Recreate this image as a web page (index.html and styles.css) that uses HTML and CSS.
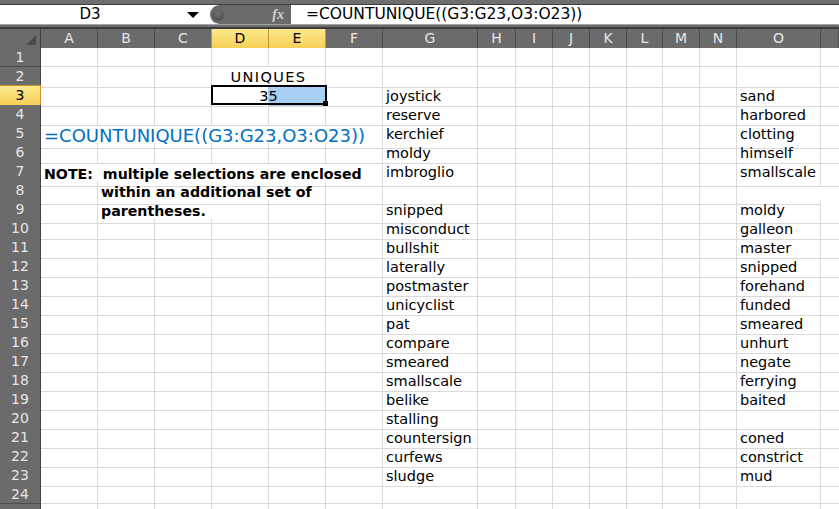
FILE: index.html
```html
<!DOCTYPE html>
<html>
<head>
<meta charset="utf-8">
<link rel="stylesheet" href="styles.css">
</head>
<body>
<div class="top">
  <div class="fbar">
    <div class="namebox"><span class="ref">D3</span><span class="arrow"></span></div>
    <div class="fxbtn"><span class="knob"></span><span class="fx">fx</span></div>
    <div class="input">=COUNTUNIQUE((G3:G23,O3:O23))</div>
  </div>
</div>
<div class="sheet">
  <div class="hrow">
    <div class="corner"><svg width="40" height="19" viewBox="0 0 40 19"><polygon points="26,16 36,16 36,6" fill="#4a4a4a"/></svg></div>
    <div>A</div><div>B</div><div>C</div><div class="sel">D</div><div class="sel">E</div><div>F</div><div>G</div><div>H</div><div>I</div><div>J</div><div>K</div><div>L</div><div>M</div><div>N</div><div>O</div><div></div>
  </div>
  <div class="row"><div class="rh">1</div><div></div><div></div><div></div><div></div><div></div><div></div><div></div><div></div><div></div><div></div><div></div><div></div><div></div><div></div><div></div><div></div></div>
  <div class="row"><div class="rh">2</div><div></div><div></div><div></div><div class="s2 uniq">UNIQUES</div><div></div><div></div><div></div><div></div><div></div><div></div><div></div><div></div><div></div><div></div><div></div></div>
  <div class="row"><div class="rh rsel">3</div><div></div><div></div><div></div><div class="s2 val">35</div><div></div><div class="t">joystick</div><div></div><div></div><div></div><div></div><div></div><div></div><div></div><div class="t">sand</div><div></div></div>
  <div class="row"><div class="rh">4</div><div></div><div></div><div></div><div></div><div></div><div></div><div class="t">reserve</div><div></div><div></div><div></div><div></div><div></div><div></div><div></div><div class="t">harbored</div><div></div></div>
  <div class="row"><div class="rh">5</div><div class="s6 formula">=COUNTUNIQUE((G3:G23,O3:O23))</div><div class="t">kerchief</div><div></div><div></div><div></div><div></div><div></div><div></div><div></div><div class="t">clotting</div><div></div></div>
  <div class="row"><div class="rh">6</div><div></div><div></div><div></div><div></div><div></div><div></div><div class="t">moldy</div><div></div><div></div><div></div><div></div><div></div><div></div><div></div><div class="t">himself</div><div></div></div>
  <div class="row"><div class="rh">7</div><div class="s6 note n1">NOTE:&nbsp; multiple selections are enclosed</div><div class="t">imbroglio</div><div></div><div></div><div></div><div></div><div></div><div></div><div></div><div class="t">smallscale</div><div></div></div>
  <div class="row"><div class="rh">8</div><div></div><div class="s4 note">within an additional set of</div><div></div><div></div><div></div><div></div><div></div><div></div><div></div><div></div><div></div><div></div></div>
  <div class="row"><div class="rh">9</div><div></div><div class="s3 note">parentheses.</div><div></div><div></div><div class="t">snipped</div><div></div><div></div><div></div><div></div><div></div><div></div><div></div><div class="t">moldy</div><div></div></div>
  <div class="row"><div class="rh">10</div><div></div><div></div><div></div><div></div><div></div><div></div><div class="t">misconduct</div><div></div><div></div><div></div><div></div><div></div><div></div><div></div><div class="t">galleon</div><div></div></div>
  <div class="row"><div class="rh">11</div><div></div><div></div><div></div><div></div><div></div><div></div><div class="t">bullshit</div><div></div><div></div><div></div><div></div><div></div><div></div><div></div><div class="t">master</div><div></div></div>
  <div class="row"><div class="rh">12</div><div></div><div></div><div></div><div></div><div></div><div></div><div class="t">laterally</div><div></div><div></div><div></div><div></div><div></div><div></div><div></div><div class="t">snipped</div><div></div></div>
  <div class="row"><div class="rh">13</div><div></div><div></div><div></div><div></div><div></div><div></div><div class="t">postmaster</div><div></div><div></div><div></div><div></div><div></div><div></div><div></div><div class="t">forehand</div><div></div></div>
  <div class="row"><div class="rh">14</div><div></div><div></div><div></div><div></div><div></div><div></div><div class="t">unicyclist</div><div></div><div></div><div></div><div></div><div></div><div></div><div></div><div class="t">funded</div><div></div></div>
  <div class="row"><div class="rh">15</div><div></div><div></div><div></div><div></div><div></div><div></div><div class="t">pat</div><div></div><div></div><div></div><div></div><div></div><div></div><div></div><div class="t">smeared</div><div></div></div>
  <div class="row"><div class="rh">16</div><div></div><div></div><div></div><div></div><div></div><div></div><div class="t">compare</div><div></div><div></div><div></div><div></div><div></div><div></div><div></div><div class="t">unhurt</div><div></div></div>
  <div class="row"><div class="rh">17</div><div></div><div></div><div></div><div></div><div></div><div></div><div class="t">smeared</div><div></div><div></div><div></div><div></div><div></div><div></div><div></div><div class="t">negate</div><div></div></div>
  <div class="row"><div class="rh">18</div><div></div><div></div><div></div><div></div><div></div><div></div><div class="t">smallscale</div><div></div><div></div><div></div><div></div><div></div><div></div><div></div><div class="t">ferrying</div><div></div></div>
  <div class="row"><div class="rh">19</div><div></div><div></div><div></div><div></div><div></div><div></div><div class="t">belike</div><div></div><div></div><div></div><div></div><div></div><div></div><div></div><div class="t">baited</div><div></div></div>
  <div class="row"><div class="rh">20</div><div></div><div></div><div></div><div></div><div></div><div></div><div class="t">stalling</div><div></div><div></div><div></div><div></div><div></div><div></div><div></div><div></div><div></div></div>
  <div class="row"><div class="rh">21</div><div></div><div></div><div></div><div></div><div></div><div></div><div class="t">countersign</div><div></div><div></div><div></div><div></div><div></div><div></div><div></div><div class="t">coned</div><div></div></div>
  <div class="row"><div class="rh">22</div><div></div><div></div><div></div><div></div><div></div><div></div><div class="t">curfews</div><div></div><div></div><div></div><div></div><div></div><div></div><div></div><div class="t">constrict</div><div></div></div>
  <div class="row"><div class="rh">23</div><div></div><div></div><div></div><div></div><div></div><div></div><div class="t">sludge</div><div></div><div></div><div></div><div></div><div></div><div></div><div></div><div class="t">mud</div><div></div></div>
  <div class="row"><div class="rh">24</div><div></div><div></div><div></div><div></div><div></div><div></div><div></div><div></div><div></div><div></div><div></div><div></div><div></div><div></div><div></div><div></div></div>
  <div class="row"><div class="rh"></div><div></div><div></div><div></div><div></div><div></div><div></div><div></div><div></div><div></div><div></div><div></div><div></div><div></div><div></div><div></div><div></div></div>
  <div class="selbox"></div>
  <div class="handle"></div>
</div>
</body>
</html>
```
FILE: styles.css
```css
html, body {
  margin: 0;
  padding: 0;
  width: 839px;
  height: 509px;
  overflow: hidden;
  background: #ffffff;
  font-family: "DejaVu Sans", Verdana, sans-serif;
}

.top {
  height: 29px;
  box-sizing: border-box;
  background: #6e6e6e;
  padding-top: 4px;
  border-bottom: 2px solid #3c3c3c;
}

.fbar {
  display: flex;
  height: 21px;
  box-sizing: border-box;
  border-top: 1px solid #3f3f3f;
  border-bottom: 1px solid #a3a3a3;
  background: #ffffff;
}

.namebox {
  width: 210px;
  display: flex;
  align-items: center;
  background: #ffffff;
}

.ref {
  width: 180px;
  text-align: center;
  font-size: 15px;
  line-height: 19px;
  color: #000;
}

.arrow {
  margin-left: 7px;
  width: 0;
  height: 0;
  border-left: 6px solid transparent;
  border-right: 6px solid transparent;
  border-top: 6px solid #000;
}

.fxbtn {
  width: 81px;
  background: #6a6a6a;
  border-radius: 10px 0 0 10px;
  display: flex;
  align-items: center;
  justify-content: space-between;
  padding: 0 7px 0 2px;
  box-sizing: border-box;
}

.knob {
  width: 12px;
  height: 12px;
  border-radius: 50%;
  background: radial-gradient(circle at 50% 35%, #747474 0, #555555 60%, #4a4a4a 100%);
}

.fx {
  font-family: "Liberation Serif", "DejaVu Serif", serif;
  font-style: italic;
  font-weight: bold;
  font-size: 14px;
  color: #d2d2d2;
  line-height: 19px;
}

.input {
  flex: 1;
  padding-left: 15px;
  font-size: 15.5px;
  line-height: 19px;
  color: #000;
  white-space: nowrap;
}

.sheet {
  position: relative;
}

.hrow, .row {
  display: grid;
  grid-template-columns: 41px repeat(6, 57px) 95px 38px 37px 37px 37px 36px 37px 37px 84px 1fr;
  height: 19px;
}

.hrow > div {
  background: #6b6b6b;
  color: #e6e6e6;
  font-size: 14px;
  line-height: 19px;
  text-align: center;
  border-right: 1px solid #4c4c4c;
  box-sizing: border-box;
}

.hrow > .corner {
  border-right: 1px solid #444;
}

.corner svg {
  display: block;
}

.hrow > .sel {
  background: linear-gradient(#fde98d, #f6cf55);
  color: #000;
  border-right: 1px solid #c8962f;
  box-shadow: -1px 0 0 #c8962f;
}

.row > div {
  border-right: 1px solid #dadada;
  border-bottom: 1px solid #dadada;
  box-sizing: border-box;
  white-space: nowrap;
  min-width: 0;
}

.row > div:last-child {
  border-right: none;
}

.row > .rh {
  background: #6b6b6b;
  color: #e6e6e6;
  font-size: 14px;
  line-height: 18px;
  text-align: center;
  border-right: 1px solid #444;
  border-bottom: 1px solid #4c4c4c;
}

.row > .rsel {
  background: linear-gradient(#fde98d, #f6cf55);
  color: #000;
  border-bottom: 1px solid #c8962f;
  border-right: 1px solid #c8962f;
  box-shadow: 0 -1px 0 #c8962f;
}

.t {
  font-size: 14.5px;
  line-height: 20px;
  padding-left: 3px;
  color: #000;
}

.s2 { grid-column: span 2; }
.s3 { grid-column: span 3; }
.s4 { grid-column: span 4; }
.s6 { grid-column: span 6; }

.uniq {
  text-align: center;
  font-size: 14.5px;
  letter-spacing: 1.4px;
  line-height: 20px;
  color: #000;
}

.val {
  text-align: center;
  font-size: 14.5px;
  line-height: 20px;
  color: #000;
  background: linear-gradient(to right, #ffffff 56px, #a9cff2 56px);
}

.formula {
  font-size: 18px;
  line-height: 23.5px;
  padding-left: 3px;
  color: #0070c0;
  position: relative;
  z-index: 1;
}

.note {
  font-size: 14.2px;
  font-weight: bold;
  line-height: 23px;
  padding-left: 3px;
  color: #000;
  position: relative;
  z-index: 1;
}

.note.n1 {
  line-height: 24px;
}

.selbox {
  position: absolute;
  left: 211px;
  top: 56px;
  width: 116px;
  height: 20px;
  box-sizing: border-box;
  border: 2px solid #000;
  z-index: 2;
}

.handle {
  position: absolute;
  left: 323px;
  top: 72px;
  width: 5px;
  height: 5px;
  background: #000;
  z-index: 3;
}
```
